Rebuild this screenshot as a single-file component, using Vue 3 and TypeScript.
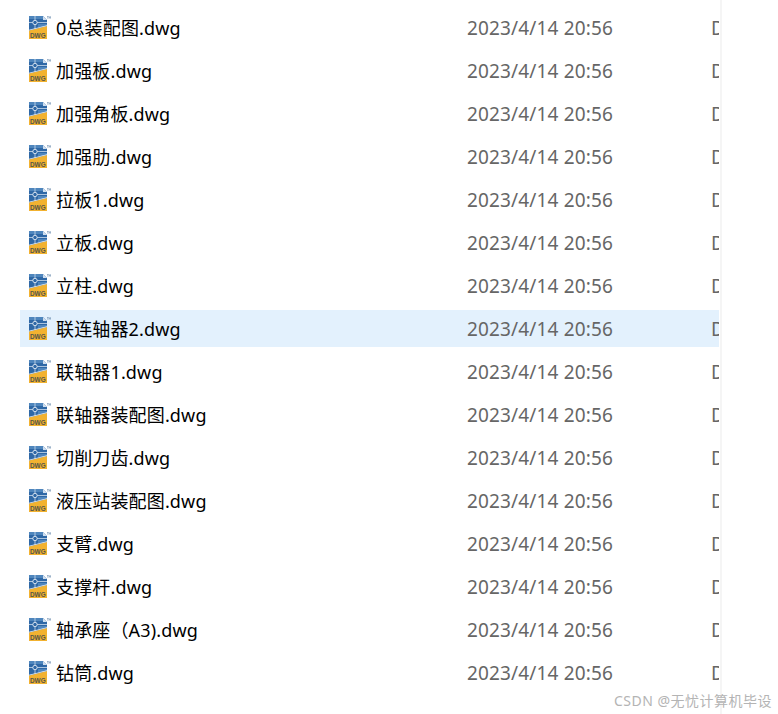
<script setup lang="ts">
const files: string[] = [
  "0总装配图.dwg",
  "加强板.dwg",
  "加强角板.dwg",
  "加强肋.dwg",
  "拉板1.dwg",
  "立板.dwg",
  "立柱.dwg",
  "联连轴器2.dwg",
  "联轴器1.dwg",
  "联轴器装配图.dwg",
  "切削刀齿.dwg",
  "液压站装配图.dwg",
  "支臂.dwg",
  "支撑杆.dwg",
  "轴承座（A3).dwg",
  "钻筒.dwg",
];
const selectedIndex = 7;
</script>

<template>
  <div class="page">
    <div class="list">
      <div
        v-for="(name, i) in files"
        :key="name"
        class="row"
        :class="{ selected: i === selectedIndex }"
      >
        <svg class="icon" viewBox="0 0 22 24" width="22" height="24">
          <path d="M0 0h14l4 4v19H0z" fill="#2f68a6" />
          <path d="M0 0h14v3H0zM9 8h9v3H9z" fill="#4f86bd" />
          <path d="M14 0l4 4h-4z" fill="#cfdeee" />
          <path d="M0 6.5h18M6 0v13" stroke="#cddcec" stroke-width="0.8" fill="none" />
          <circle cx="6" cy="6.5" r="2.2" fill="#2f68a6" stroke="#f2f6fa" stroke-width="0.8" />
          <path d="M0 14.5L18 10v13H0z" fill="#f2b230" />
          <path d="M0 13.7L18 9.2V10L0 14.5z" fill="#e8eef5" />
          <text x="1" y="21.5" class="icon-text">DWG</text>
          <path d="M18 0.5h1.6M18.8 0.5v2.2M20.2 2.7V0.5l0.7 1.2 0.7-1.2v2.2" stroke="#6f8fb0" stroke-width="0.6" fill="none" />
        </svg>
        <span class="name">{{ name }}</span>
        <span class="date">2023/4/14 20:56</span>
        <span class="type">D</span>
      </div>
    </div>
    <div class="divider"></div>
    <div class="watermark">CSDN @无忧计算机毕设</div>
  </div>
</template>

<style scoped>
.page {
  position: relative;
  display: flex;
  width: 778px;
  height: 714px;
  overflow: hidden;
  background: #fff;
  font-family: "Noto Sans", "Noto Sans CJK SC", sans-serif;
}

.list {
  display: flex;
  flex-direction: column;
  gap: 6px;
  width: 699px;
  margin-left: 20px;
  padding-top: 9px;
}

.row {
  display: flex;
  flex: none;
  align-items: center;
  height: 37px;
  padding-left: 9px;
  overflow: hidden;
  white-space: nowrap;
  font-size: 18px;
}

.row.selected {
  background: #e3f1fd;
}

.icon {
  flex: none;
}

.icon-text {
  font-family: "Liberation Sans", sans-serif;
  font-size: 6.4px;
  font-weight: 700;
  fill: #55554a;
}

.name {
  flex: none;
  width: 411px;
  margin-left: 5px;
  margin-bottom: 2px;
  color: #000;
  letter-spacing: 0.15px;
}

.date {
  flex: none;
  width: 244px;
  color: #666;
  font-size: 19px;
  letter-spacing: 0.15px;
}

.type {
  flex: none;
  color: #666;
  font-size: 19px;
}

.divider {
  flex: none;
  width: 2px;
  height: 100%;
  margin-left: 1px;
  background: #f5f5f5;
}

.watermark {
  position: absolute;
  right: 6px;
  bottom: 4px;
  color: #b4b4b4;
  font-size: 14px;
  letter-spacing: 0.5px;
}
</style>

<style>
body {
  overflow: hidden;
}
</style>
